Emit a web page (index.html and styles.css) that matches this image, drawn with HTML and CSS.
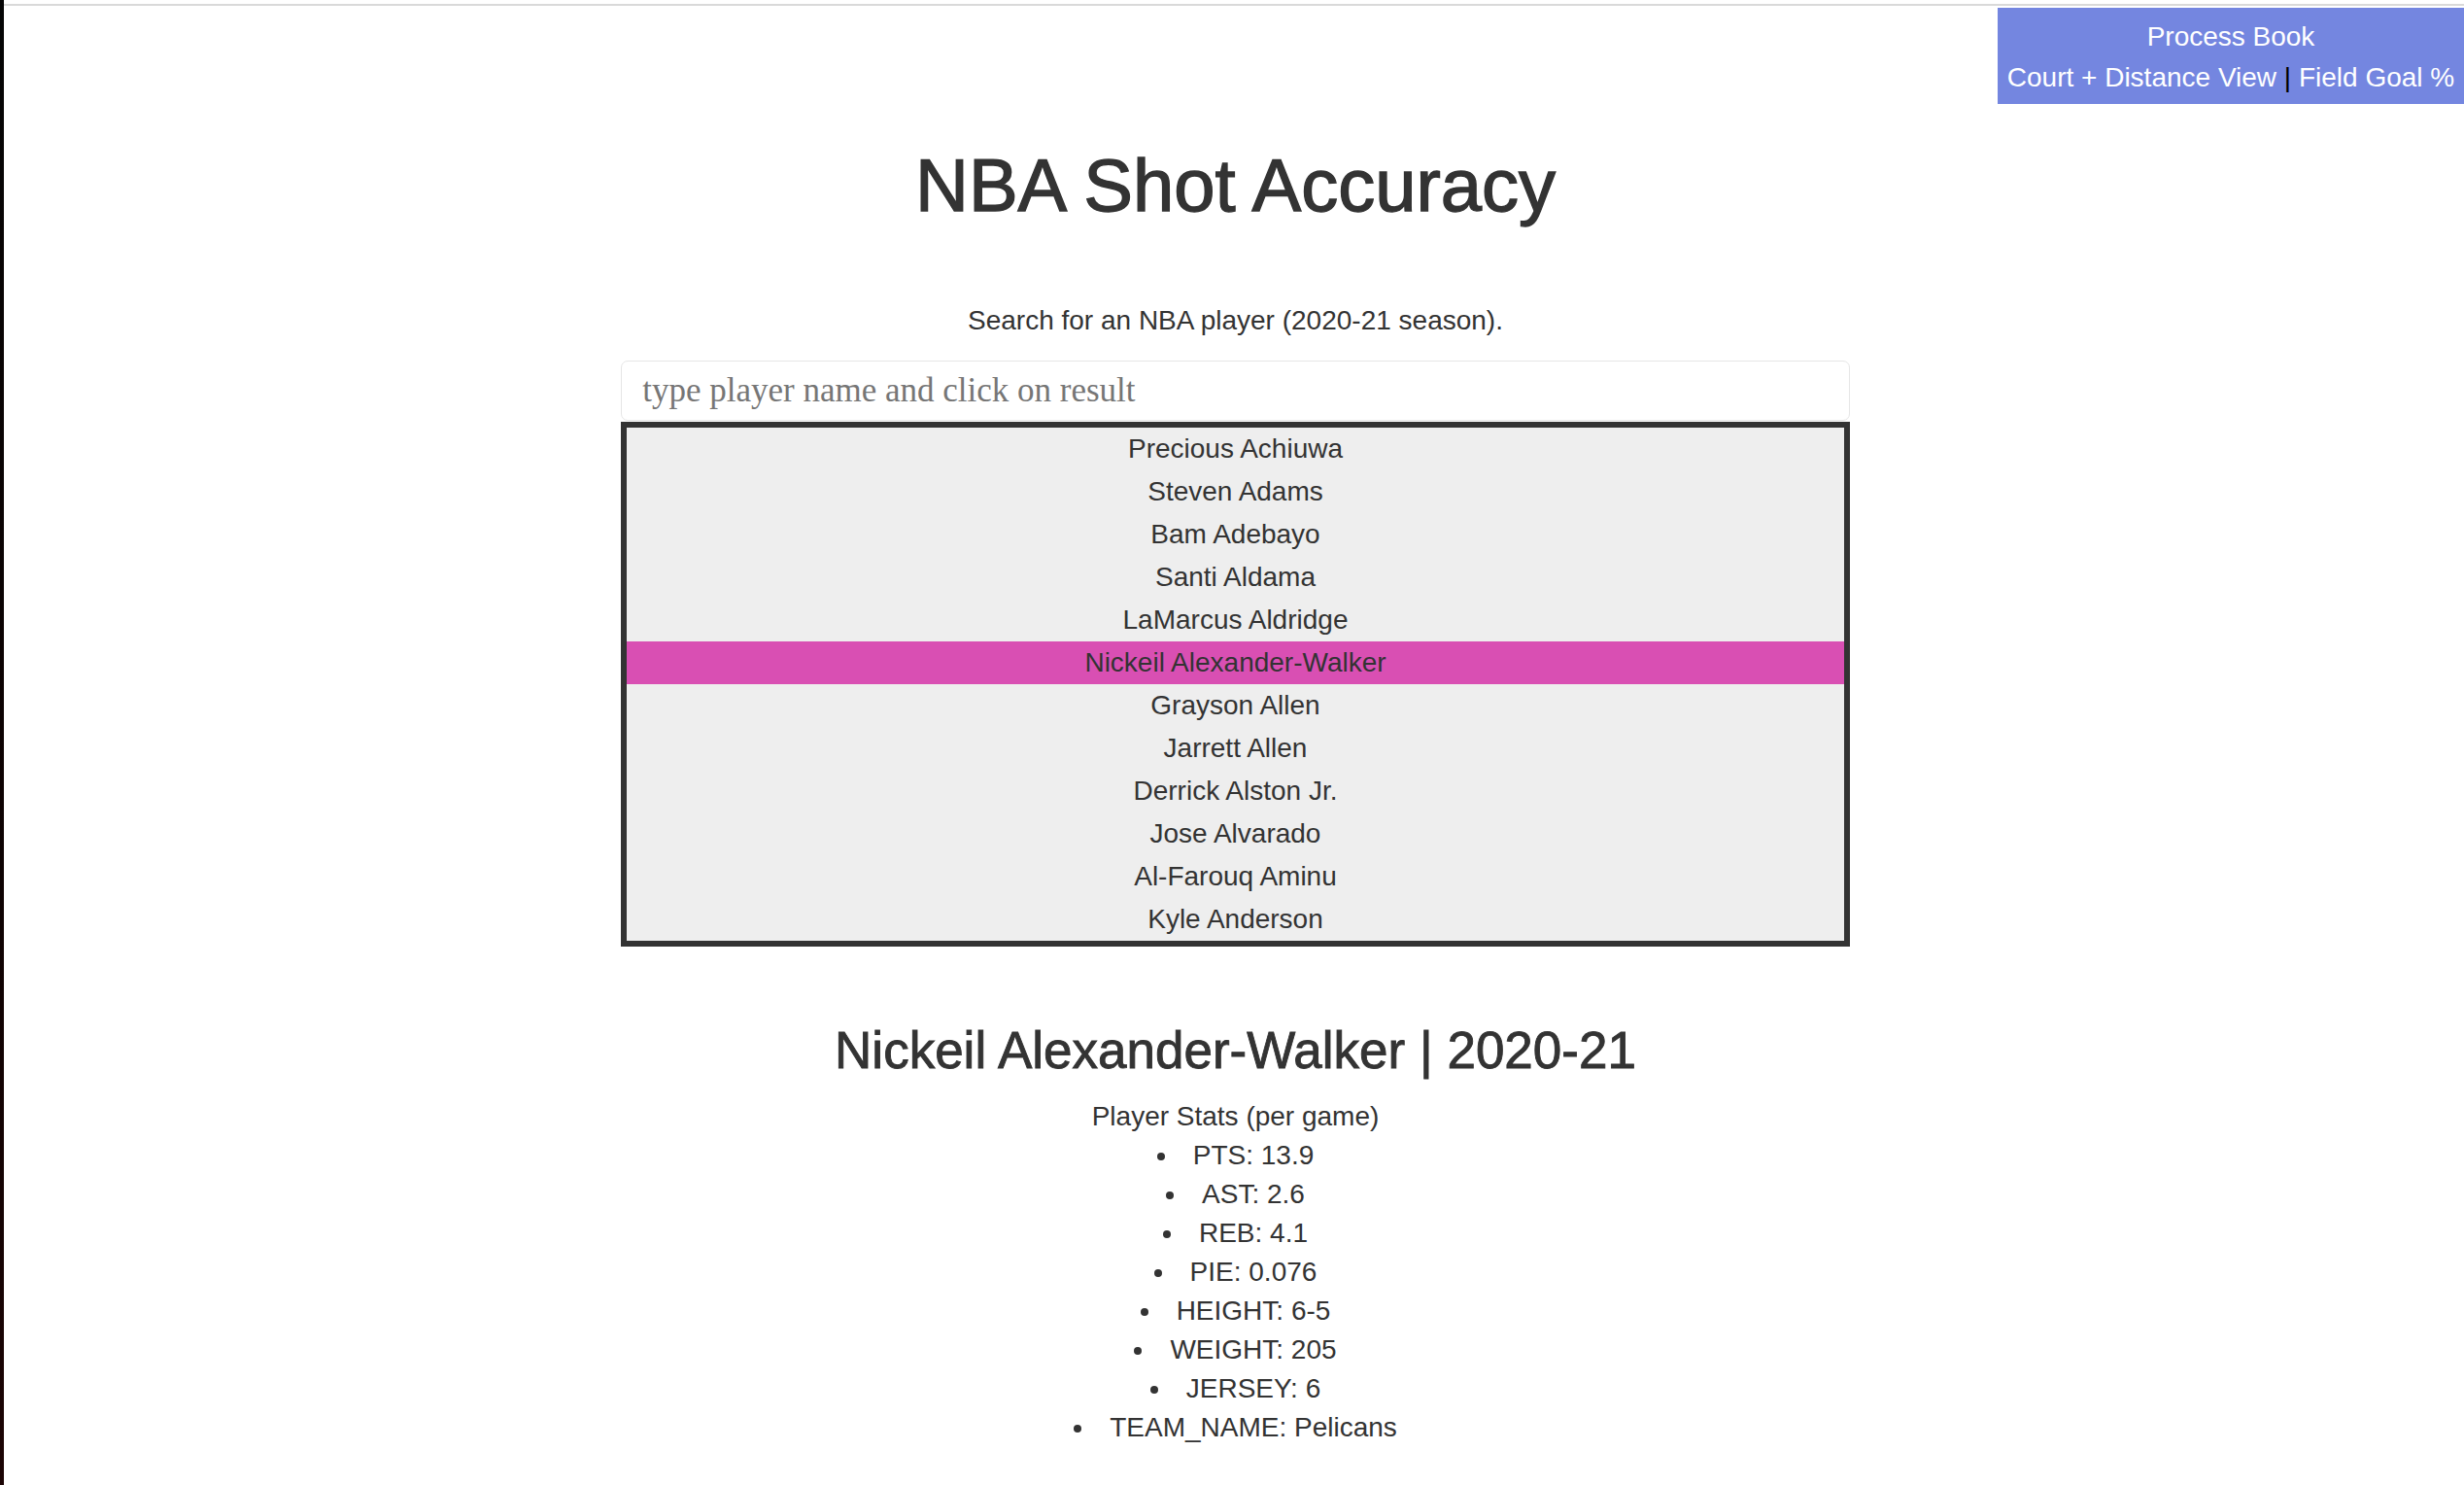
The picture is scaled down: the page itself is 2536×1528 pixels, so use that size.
FILE: index.html
```html
<!DOCTYPE html>
<html lang="en">
<head>
<meta charset="utf-8">
<title>NBA Shot Accuracy</title>
<link rel="stylesheet" href="styles.css">
</head>
<body>
<div class="frame">
  <div class="topline"></div>
  <header class="header">
    <nav class="nav">
      <div class="nav-row"><a class="nav-link" href="#">Process Book</a></div>
      <div class="nav-row"><a class="nav-link" href="#">Court + Distance View</a> <span class="sep">|</span> <a class="nav-link" href="#">Field Goal %</a></div>
    </nav>
  </header>
  <main class="main">
    <h1 class="title">NBA Shot Accuracy</h1>
    <p class="lead">Search for an NBA player (2020-21 season).</p>
    <div class="search">
      <input class="search-input" type="text" placeholder="type player name and click on result">
      <ul class="results">
        <li class="result">Precious Achiuwa</li>
        <li class="result">Steven Adams</li>
        <li class="result">Bam Adebayo</li>
        <li class="result">Santi Aldama</li>
        <li class="result">LaMarcus Aldridge</li>
        <li class="result result-active">Nickeil Alexander-Walker</li>
        <li class="result">Grayson Allen</li>
        <li class="result">Jarrett Allen</li>
        <li class="result">Derrick Alston Jr.</li>
        <li class="result">Jose Alvarado</li>
        <li class="result">Al-Farouq Aminu</li>
        <li class="result">Kyle Anderson</li>
      </ul>
    </div>
    <h2 class="player">Nickeil Alexander-Walker | 2020-21</h2>
    <div class="stats">
      <div class="stats-title">Player Stats (per game)</div>
      <ul class="stats-list">
        <li>PTS: 13.9</li>
        <li>AST: 2.6</li>
        <li>REB: 4.1</li>
        <li>PIE: 0.076</li>
        <li>HEIGHT: 6-5</li>
        <li>WEIGHT: 205</li>
        <li>JERSEY: 6</li>
        <li>TEAM_NAME: Pelicans</li>
      </ul>
    </div>
  </main>
</div>
</body>
</html>
```
FILE: styles.css
```css
html, body {
  margin: 0;
  padding: 0;
}

body {
  background: linear-gradient(#050505, #0e0202 60%, #1c0404);
  font-family: "Liberation Sans", Arial, Helvetica, sans-serif;
  font-size: 28px;
  line-height: 40px;
  color: #333333;
}

.frame {
  margin-left: 4px;
  min-height: 100vh;
  background: #ffffff;
  padding-top: 4px;
  box-sizing: border-box;
}

.topline {
  height: 2px;
  background: #d9d9d9;
}

.header {
  display: flex;
  justify-content: flex-end;
  padding-top: 2px;
}

.nav {
  width: 480px;
  height: 99px;
  box-sizing: border-box;
  padding-top: 9px;
  background: #7486e0;
  text-align: center;
  font-size: 28px;
  line-height: 42px;
}

.nav-link {
  color: #ffffff;
  text-decoration: none;
}

.sep {
  color: #000000;
}

.main {
  display: flex;
  flex-direction: column;
  align-items: center;
  text-align: center;
  padding-left: 3px;
}

.title {
  margin: 44px 0 0;
  font-size: 76px;
  line-height: 79px;
  font-weight: 500;
  color: #333333;
  -webkit-text-stroke: 1.4px #333333;
}

.lead {
  margin: 80px 0 0;
  font-size: 28px;
  line-height: 40px;
}

.search {
  width: 50%;
  margin-top: 21px;
}

.search-input {
  display: block;
  width: 100%;
  height: 62px;
  box-sizing: border-box;
  margin: 0;
  padding: 0 21px;
  border: 1px solid #e6e6e6;
  border-radius: 7px;
  font-family: "Liberation Serif", Georgia, serif;
  font-size: 35px;
  color: #333333;
  background: #ffffff;
  outline: none;
}

.search-input::placeholder {
  color: #767676;
}

.results {
  list-style: none;
  margin: 1px 0 0;
  padding: 0;
  border: 6px solid #333333;
  background: #eeeeee;
}

.result {
  height: 44px;
  line-height: 44px;
  font-size: 28px;
  color: #333333;
}

.result-active {
  background: #d94fb3;
}

.player {
  margin: 78px 0 0;
  font-size: 53px;
  line-height: 1.1;
  font-weight: 500;
  color: #333333;
  -webkit-text-stroke: 0.9px #333333;
}

.stats {
  margin-top: 19px;
}

.stats-title {
  line-height: 40px;
}

.stats-list {
  margin: 0;
  padding: 0;
  list-style: disc inside;
}

.stats-list li {
  line-height: 40px;
}
```
